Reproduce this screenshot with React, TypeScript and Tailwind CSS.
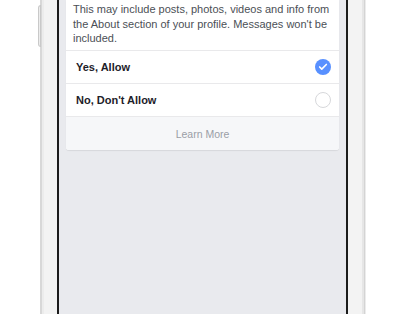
import { Check } from "lucide-react";

const options = [
  { label: "Yes, Allow", checked: true },
  { label: "No, Don't Allow", checked: false },
];

export default function App() {
  return (
    <div
      className="flex h-[314px] w-[406px] overflow-hidden bg-white"
      style={{ fontFamily: "'Liberation Sans', Arial, sans-serif" }}
    >
      {/* left side of phone */}
      <div className="w-[38px] shrink-0" />
      <div className="relative flex w-[19px] shrink-0">
        <div className="absolute left-0 top-[5px] h-[42px] w-[3px] rounded-l-sm border border-[#c9c9c9] bg-[#ececec]" />
        <div className="ml-[2px] w-[2px] bg-[#d8d8d8]" />
        <div className="w-[2px] bg-[#ececec]" />
        <div className="flex-1 bg-[#f3f3f3]" />
      </div>
      <div className="w-[2px] shrink-0 bg-[#1c1c1c]" />

      {/* screen */}
      <div className="w-[287px] shrink-0 bg-[#e9eaee] px-[7px]">
        <div className="overflow-hidden rounded-b-[3px] bg-white shadow-[0_1px_1px_rgba(0,0,0,0.08)]">
          <p className="border-b border-[#e9e9eb] pl-[7px] pr-[6px] pt-[2px] pb-[4px] text-[11px] leading-[14.5px] text-[#4b4f56]">
            This may include posts, photos, videos and info from the About section of your profile. Messages won't be
            included.
          </p>
          {options.map((o) => (
            <div
              key={o.label}
              className="flex h-[33px] items-center justify-between border-b border-[#e9e9eb] pl-[10px] pr-[8px] pt-[1px]"
            >
              <span className="text-[11px] font-bold text-[#1d2129]">{o.label}</span>
              {o.checked ? (
                <span className="flex h-[16px] w-[16px] items-center justify-center rounded-full bg-[#5890ff]">
                  <Check className="h-[10px] w-[10px] text-white" strokeWidth={4} />
                </span>
              ) : (
                <span className="h-[16px] w-[16px] rounded-full border border-[#d7d8db]" />
              )}
            </div>
          ))}
          <div className="flex h-[33px] items-center justify-center bg-[#f6f7f9] pt-[4px] text-[10.5px] text-[#9a9ea6]">
            Learn More
          </div>
        </div>
      </div>

      {/* right side of phone */}
      <div className="w-[2px] shrink-0 bg-[#1c1c1c]" />
      <div className="flex w-[18px] shrink-0">
        <div className="flex-1 bg-[#f3f3f3]" />
        <div className="w-[2px] bg-[#e6e6e6]" />
        <div className="w-[1px] bg-[#d4d4d4]" />
        <div className="w-[1px] bg-[#ececec]" />
      </div>
      <div className="flex-1" />
    </div>
  );
}
